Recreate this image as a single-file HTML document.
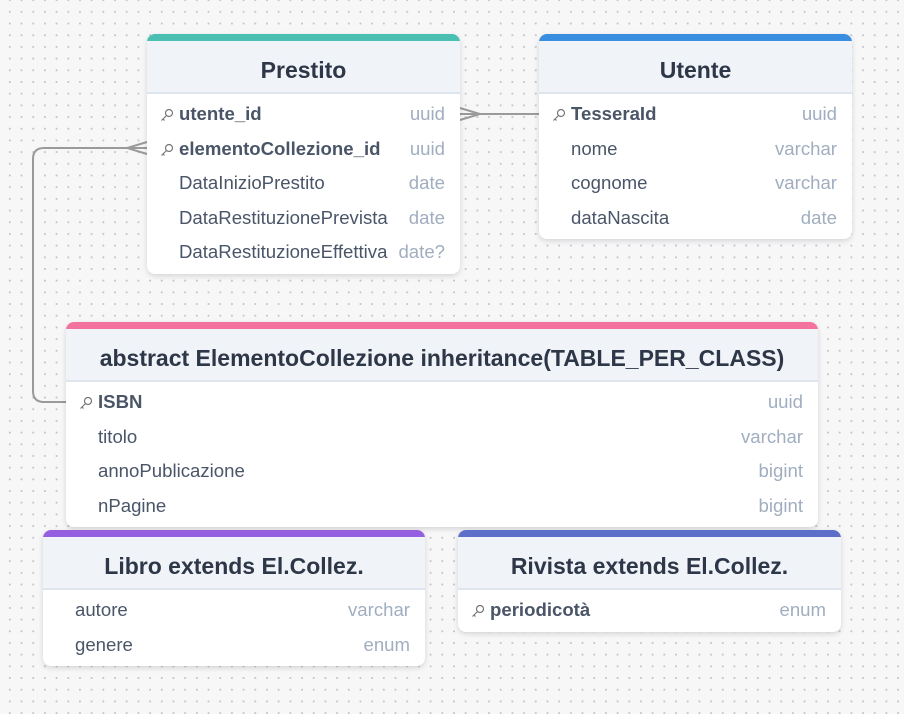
<!DOCTYPE html>
<html><head><meta charset="utf-8"><style>
*{margin:0;padding:0;box-sizing:border-box}
body{width:904px;height:714px;overflow:hidden;background-color:#f7f7f8;background-image:radial-gradient(circle,#c4c6cc 0.9px,transparent 1.2px);background-size:11.7px 11.7px;background-position:4px 6px;font-family:"Liberation Sans",sans-serif;position:relative}
.card{position:absolute;background:#fff;border-radius:8px;box-shadow:0 2px 6px rgba(0,0,0,.14);overflow:hidden}
.bar{height:7px}
.hd{height:53px;background:#f0f3f8;border-bottom:2px solid #dfe5ee;display:flex;align-items:center;justify-content:center;font-weight:bold;font-size:23px;color:#2d3748;padding-top:7px}
.rows{padding-top:3px}
.r{height:34.5px;display:flex;align-items:center;font-size:18.6px;color:#4a5568;padding:0 15px 0 32px;position:relative}
.r .n{flex:1;white-space:nowrap;overflow:hidden}
.r .t{color:#a0aec0;margin-left:8px}
.r.k .n{font-weight:bold}
.r svg{position:absolute;left:13px;top:11px}
</style></head><body>
<svg width="904" height="714" style="position:absolute;left:0;top:0">
<g stroke="#9a9a9a" stroke-width="2" fill="none">
<path d="M460 114 H539 M460 108 L480 114 L460 120"/>
<path d="M147 148 H44 Q33 148 33 159 V391 Q33 402 44 402 H66 M147 142 L127 148 L147 154"/>
</g></svg>

<div class="card" style="left:147px;top:34px;width:313px;height:240px">
<div class="bar" style="background:#4bbfb1"></div>
<div class="hd">Prestito</div>
<div class="rows">
<div class="r k"><svg width="14" height="14" viewBox="0 0 14 14"><circle cx="9" cy="5" r="3.5" fill="none" stroke="#777" stroke-width="1.2"/><path d="M6.5 7.5L1.5 12.5M3 11l1.5 1.5" stroke="#777" stroke-width="1.2" fill="none"/></svg><span class="n">utente_id</span><span class="t">uuid</span></div>
<div class="r k"><svg width="14" height="14" viewBox="0 0 14 14"><circle cx="9" cy="5" r="3.5" fill="none" stroke="#777" stroke-width="1.2"/><path d="M6.5 7.5L1.5 12.5M3 11l1.5 1.5" stroke="#777" stroke-width="1.2" fill="none"/></svg><span class="n">elementoCollezione_id</span><span class="t">uuid</span></div>
<div class="r"><span class="n">DataInizioPrestito</span><span class="t">date</span></div>
<div class="r"><span class="n">DataRestituzionePrevista</span><span class="t">date</span></div>
<div class="r"><span class="n">DataRestituzioneEffettiva</span><span class="t">date?</span></div>
</div></div>

<div class="card" style="left:539px;top:34px;width:313px;height:205px">
<div class="bar" style="background:#3a8ee0"></div>
<div class="hd">Utente</div>
<div class="rows">
<div class="r k"><svg width="14" height="14" viewBox="0 0 14 14"><circle cx="9" cy="5" r="3.5" fill="none" stroke="#777" stroke-width="1.2"/><path d="M6.5 7.5L1.5 12.5M3 11l1.5 1.5" stroke="#777" stroke-width="1.2" fill="none"/></svg><span class="n">TesseraId</span><span class="t">uuid</span></div>
<div class="r"><span class="n">nome</span><span class="t">varchar</span></div>
<div class="r"><span class="n">cognome</span><span class="t">varchar</span></div>
<div class="r"><span class="n">dataNascita</span><span class="t">date</span></div>
</div></div>

<div class="card" style="left:66px;top:322px;width:752px;height:205px">
<div class="bar" style="background:#f4729e"></div>
<div class="hd">abstract ElementoCollezione inheritance(TABLE_PER_CLASS)</div>
<div class="rows">
<div class="r k"><svg width="14" height="14" viewBox="0 0 14 14"><circle cx="9" cy="5" r="3.5" fill="none" stroke="#777" stroke-width="1.2"/><path d="M6.5 7.5L1.5 12.5M3 11l1.5 1.5" stroke="#777" stroke-width="1.2" fill="none"/></svg><span class="n">ISBN</span><span class="t">uuid</span></div>
<div class="r"><span class="n">titolo</span><span class="t">varchar</span></div>
<div class="r"><span class="n">annoPublicazione</span><span class="t">bigint</span></div>
<div class="r"><span class="n">nPagine</span><span class="t">bigint</span></div>
</div></div>

<div class="card" style="left:43px;top:530px;width:382px;height:136px">
<div class="bar" style="background:#9560e0"></div>
<div class="hd">Libro extends El.Collez.</div>
<div class="rows">
<div class="r"><span class="n">autore</span><span class="t">varchar</span></div>
<div class="r"><span class="n">genere</span><span class="t">enum</span></div>
</div></div>

<div class="card" style="left:458px;top:530px;width:383px;height:102px">
<div class="bar" style="background:#5d6fc9"></div>
<div class="hd">Rivista extends El.Collez.</div>
<div class="rows">
<div class="r k"><svg width="14" height="14" viewBox="0 0 14 14"><circle cx="9" cy="5" r="3.5" fill="none" stroke="#777" stroke-width="1.2"/><path d="M6.5 7.5L1.5 12.5M3 11l1.5 1.5" stroke="#777" stroke-width="1.2" fill="none"/></svg><span class="n">periodicotà</span><span class="t">enum</span></div>
</div></div>
</body></html>
